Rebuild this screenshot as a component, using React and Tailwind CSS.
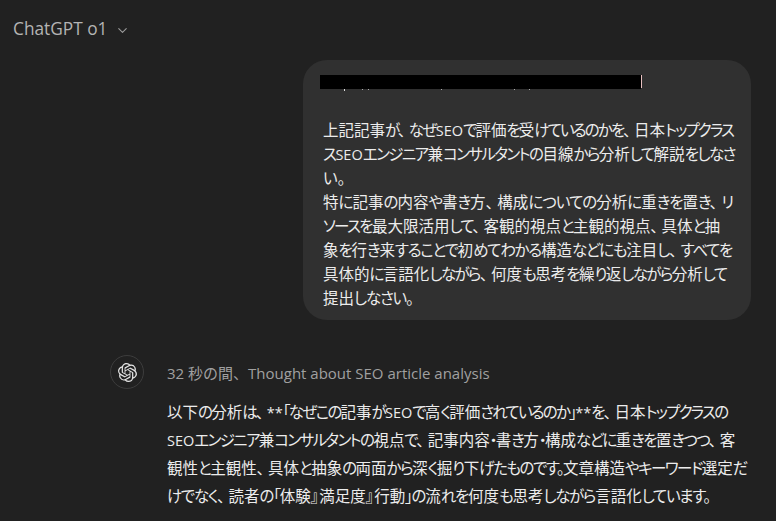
import React from "react";
import { SiOpenai } from "react-icons/si";
import { ChevronDown } from "lucide-react";

function Runs({ text }) {
  const parts = text.split(/([\u4e00-\u9fff々]+|[A-Za-z*]+|、|』)/).filter(Boolean);
  return parts.map((p, i) => {
    if (p === "、") return <span key={i} className="mr-[5px]">{p}</span>;
    if (p === "』") return <span key={i} className="mr-[2px]">{p}</span>;
    if (/^[A-Za-z*]/.test(p)) return <span key={i} className="text-[14.5px] tracking-normal">{p}</span>;
    if (/^[\u4e00-\u9fff々]/.test(p)) return <span key={i} className="tracking-normal">{p}</span>;
    return <span key={i}>{p}</span>;
  });
}

function Lines({ items, height }) {
  return items.map(([text, cls]) => (
    <span key={text} className={"block whitespace-nowrap " + height + " " + cls}><Runs text={text} /></span>
  ));
}

export default function App() {
  return (
    <div className="h-[521px] w-[776px] overflow-hidden bg-[#212121] text-[#ececec] font-['Open_Sans','Noto_Sans_CJK_JP',sans-serif]">
      <header className="flex h-[56px] items-center gap-[7px] pl-[13px] pt-[2px] text-[#b4b4b4]">
        <span className="text-[17.3px] font-medium leading-6">ChatGPT o1</span>
        <ChevronDown size={15} strokeWidth={1.75} className="mt-[2px] text-[#9b9b9b]" />
      </header>
      <div className="flex justify-end pr-[25px] pt-[4px]">
        <div className="h-[260px] w-[448px] rounded-[24px] bg-[#303030] px-[20px] py-[10px] text-[15.5px] leading-[24px]">
          <div className="-ml-[3px] h-[24px] pt-[5px]">
            <div className="flex h-[14px] items-start">
              <div className="h-[14px] w-[321px] bg-black"></div>
              <div className="h-[13px] w-px bg-[#e8c0c0]"></div>
            </div>
            <div className="flex pl-[24px]">
              <div className="h-[2px] w-px bg-[#dddddd]"></div>
              <div className="ml-[17px] h-px w-px bg-[#aaaaaa]"></div>
              <div className="ml-[5px] h-px w-px bg-[#aaaaaa]"></div>
              <div className="ml-[72px] h-px w-px bg-[#aaaaaa]"></div>
              <div className="ml-[72px] h-px w-px bg-[#aaaaaa]"></div>
              <div className="ml-[14px] h-px w-px bg-[#aaaaaa]"></div>
            </div>
          </div>
          <div className="mt-[24px] [font-feature-settings:'palt']">
            <Lines height="h-[24px]" items={[
              ["上記記事が、なぜSEOで評価を受けているのかを、日本トップクラス", "tracking-[-1.9px]"],
              ["スSEOエンジニア兼コンサルタントの目線から分析して解説をしなさ", "tracking-[-1.55px]"],
              ["い。", ""],
              ["特に記事の内容や書き方、構成についての分析に重きを置き、リ", "tracking-[-1px]"],
              ["ソースを最大限活用して、客観的視点と主観的視点、具体と抽", "tracking-[-1.65px]"],
              ["象を行き来することで初めてわかる構造などにも注目し、すべてを", "tracking-[-1.25px]"],
              ["具体的に言語化しながら、何度も思考を繰り返しながら分析して", "tracking-[-1.6px]"],
              ["提出しなさい。", "tracking-[-1.2px]"],
            ]} />
          </div>
        </div>
      </div>
      <div className="flex gap-[23px] pl-[110px] pt-[35px]">
        <div className="flex h-[34px] w-[34px] shrink-0 items-center justify-center rounded-full border border-[#3d3d3d]">
          <SiOpenai size={19} className="text-[#e3e3e3]" />
        </div>
        <div className="w-[582px]">
          <div className="whitespace-nowrap pt-[6px] text-[15px] leading-[24px] text-[#a0a0a0]">32 秒の間、Thought about SEO article analysis</div>
          <div className="mt-[13px] text-[15.5px] leading-[28px] [font-feature-settings:'palt']">
            <Lines height="h-[28px]" items={[
              ["以下の分析は、**「なぜこの記事がSEOで高く評価されているのか」**を、日本トップクラスの", "tracking-[-1.8px]"],
              ["SEOエンジニア兼コンサルタントの視点で、記事内容・書き方・構成などに重きを置きつつ、客", "tracking-[-1.6px]"],
              ["観性と主観性、具体と抽象の両面から深く掘り下げたものです。文章構造やキーワード選定だ", "tracking-[-1.5px]"],
              ["けでなく、読者の「体験』満足度』行動」の流れを何度も思考しながら言語化しています。", "tracking-[-1.3px]"],
            ]} />
          </div>
        </div>
      </div>
    </div>
  );
}
